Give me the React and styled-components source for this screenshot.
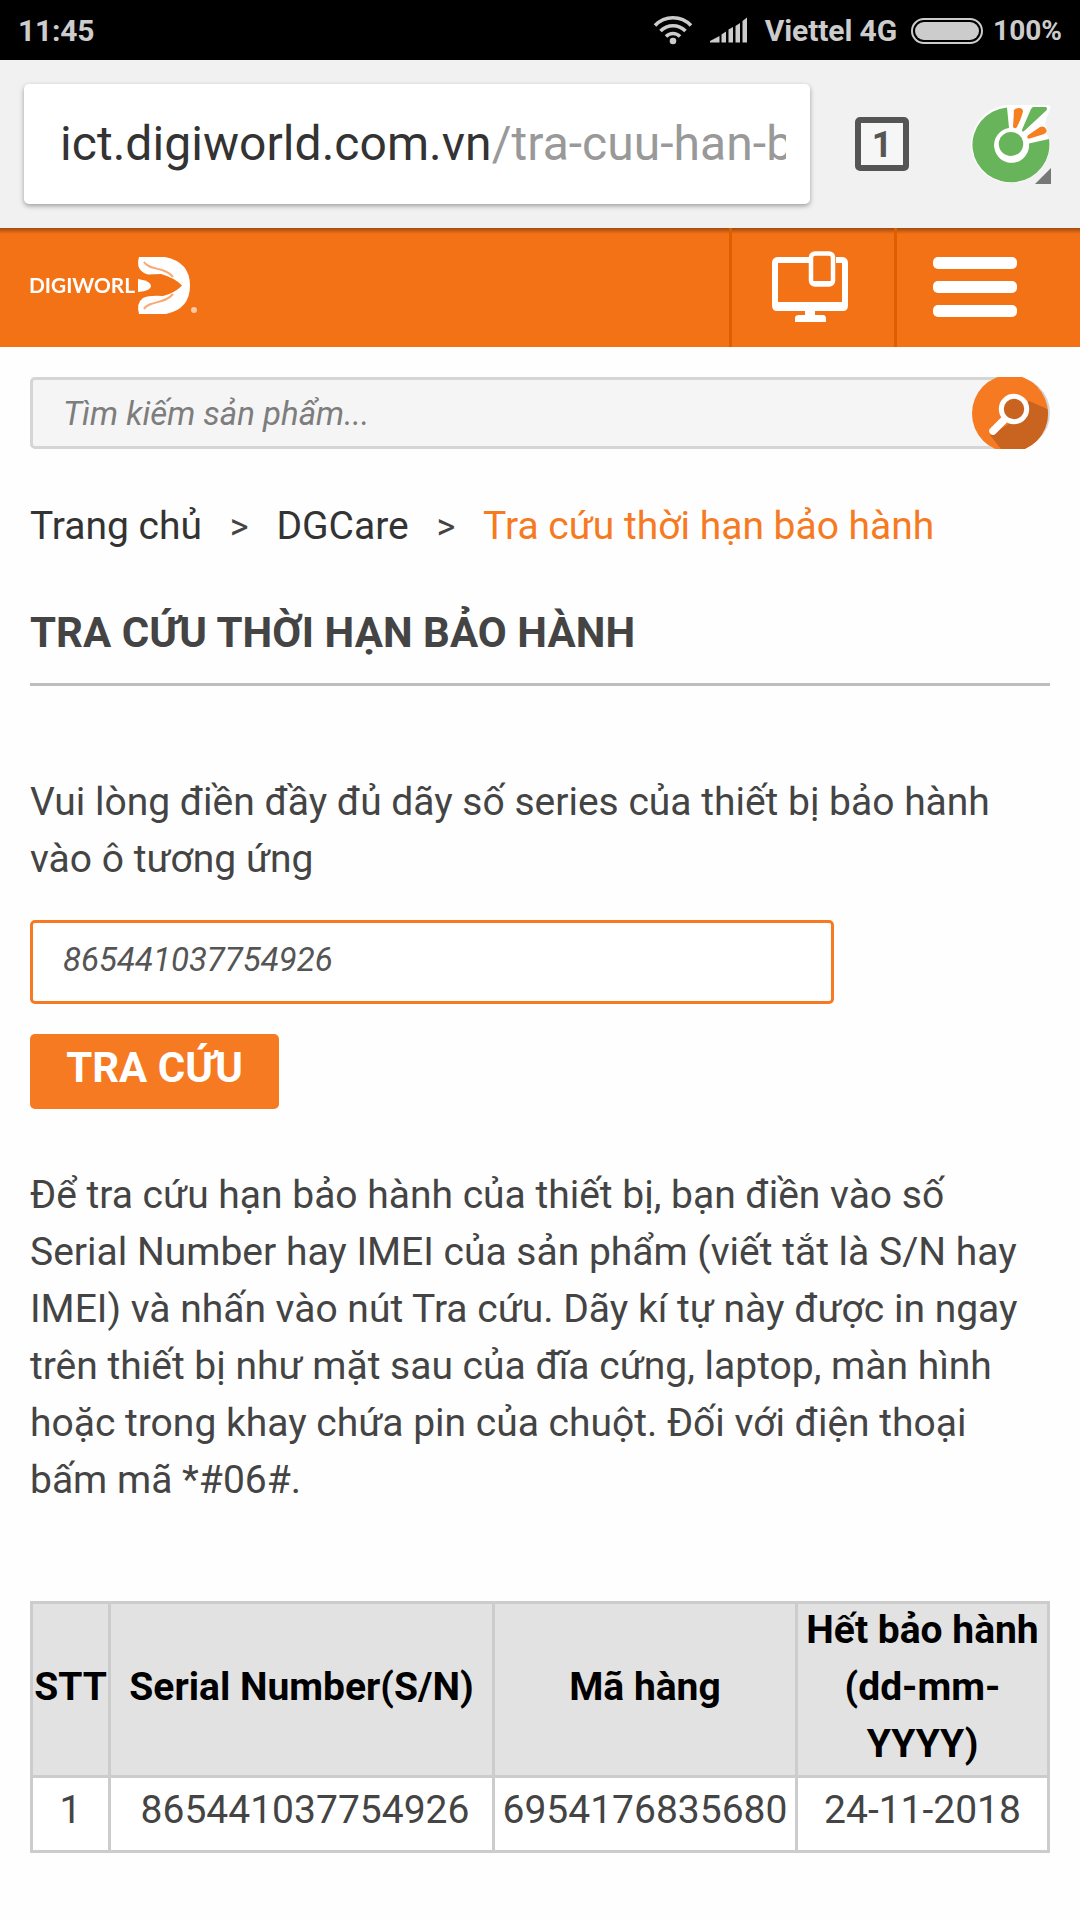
import React from 'react';
import styled, { createGlobalStyle } from 'styled-components';

const GlobalStyle = createGlobalStyle`
  * {
    box-sizing: border-box;
  }
  body {
    margin: 0;
    background: #fefefe;
    font-family: Roboto, 'Noto Sans', sans-serif;
    font-size: 39px;
    line-height: 57px;
    color: #444;
  }
`;

const Screen = styled.div`
  width: 1080px;
  height: 1920px;
  overflow: hidden;
`;

const StatusBar = styled.div`
  display: flex;
  align-items: center;
  height: 60px;
  padding: 2px 18px 0;
  background: #000;
  color: #ccc;
  font-size: 30px;
  font-weight: 700;
  line-height: 36px;
  white-space: nowrap;
  svg {
    flex: none;
    margin-top: -3px;
  }
`;

const Clock = styled.span`
  margin-right: auto;
  letter-spacing: -0.2px;
`;

const Carrier = styled.span`
  margin-left: 17px;
  letter-spacing: -0.1px;
`;

const Battery = styled.div`
  width: 72px;
  height: 26px;
  margin: 0 10px 0 14px;
  padding: 2px;
  border: 2px solid #ccc;
  border-radius: 13px;
  &::before {
    content: '';
    display: block;
    height: 18px;
    border-radius: 9px;
    background: #ccc;
  }
`;

const Percent = styled.span`
  font-size: 28px;
`;

const Toolbar = styled.div`
  display: flex;
  align-items: center;
  height: 168px;
  padding: 0 28px 0 24px;
  background: #f1f1f1;
  svg {
    flex: none;
  }
`;

const UrlBox = styled.div`
  flex: none;
  width: 786px;
  height: 120px;
  padding: 0 24px 0 36px;
  border-radius: 5px;
  background: #fff;
  box-shadow: 0 2px 5px rgba(0, 0, 0, 0.35);
`;

const Url = styled.div`
  overflow: hidden;
  color: #333;
  font-size: 48px;
  line-height: 120px;
  letter-spacing: 0.05px;
  white-space: nowrap;
  span {
    color: #999;
  }
`;

const TabCount = styled.div`
  flex: none;
  width: 54px;
  height: 54px;
  margin: 0 62px 0 45px;
  border: 6px solid #555;
  border-radius: 5px;
  background: #f6f6f6;
  color: #555;
  font-size: 36px;
  font-weight: 700;
  line-height: 44px;
  text-align: center;
`;

const Header = styled.div`
  display: flex;
  height: 119px;
  background: linear-gradient(rgba(0, 0, 0, 0.35), rgba(0, 0, 0, 0) 6px) #f47216;
`;

const Brand = styled.div`
  flex: 1;
  padding: 29px 0 0 30px;
  svg {
    filter: blur(0.6px);
  }
`;

const HeaderButton = styled.div`
  width: ${props => props.width}px;
  padding: ${props => props.pad};
  border-left: 3px solid #dc5f04;
`;

const Content = styled.div`
  padding: 30px;
`;

const Search = styled.div`
  display: flex;
  justify-content: space-between;
  height: 72px;
  border: 3px solid #d5d5d5;
  border-radius: 5px 36px 36px 5px;
  background: #f5f5f5;
  svg {
    flex: none;
    margin: -3px -3px 0 0;
  }
`;

const Placeholder = styled.div`
  padding-left: 30px;
  color: #7d7d7d;
  font-size: 33px;
  font-style: italic;
  line-height: 68px;
`;

const Breadcrumb = styled.div`
  display: flex;
  height: 57px;
  margin-top: 49px;
  white-space: nowrap;
`;

const Crumb = styled.span`
  color: ${props => (props.$active ? '#f67a22' : '#333')};
`;

const Arrow = styled.span`
  width: 74.4px;
  padding-top: 1px;
  font-size: 36px;
  text-align: center;
`;

const Title = styled.h1`
  margin: 49px 0 0;
  padding-bottom: 22px;
  border-bottom: 3px solid #bdbdbd;
  font-size: 42px;
  font-weight: 700;
  line-height: 57px;
  letter-spacing: 0.05px;
`;

const Text = styled.p`
  margin: ${props => props.$top}px 0 0;
  white-space: nowrap;
`;

const Serial = styled.div`
  width: 804px;
  height: 84px;
  margin-top: 32px;
  padding: 8px 30px;
  border: 3px solid #f67a22;
  border-radius: 5px;
  background: #fff;
  color: #555;
  font-size: 33px;
  font-style: italic;
`;

const Submit = styled.div`
  width: 249px;
  height: 75px;
  margin-top: 30px;
  padding-top: 5px;
  border-radius: 5px;
  background: #f67a22;
  color: #fff;
  font-size: 42px;
  font-weight: 700;
  text-align: center;
`;

const Table = styled.div`
  display: grid;
  grid-template-columns: 75px 381px 300px 249px;
  grid-template-rows: 171px 72px;
  gap: 3px;
  width: 1020px;
  margin-top: 92px;
  padding: 3px;
  background: #ccc;
`;

const HeadCell = styled.div`
  display: flex;
  flex-direction: column;
  justify-content: center;
  background: #e2e2e2;
  color: #000;
  font-weight: 700;
  text-align: center;
  white-space: nowrap;
  span {
    display: block;
    margin: -2px 0 2px;
  }
`;

const Cell = styled.div`
  padding: ${props => props.$pad || '4px 0'};
  background: #fff;
  text-align: center;
`;

const WifiIcon = () => (
  <svg width="40" height="30" viewBox="0 0 40 30">
    <g fill="none" stroke="#ccc" strokeWidth="3.6">
      <path d="M2 10.5C12 .2 28 .2 38 10.5" />
      <path d="M7.5 16C14.5 9 25.5 9 32.5 16" />
      <path d="M13 21.5C17 17.500 23 17.500 27 21.5" />
    </g>
    <circle cx="20" cy="26" r="3.3" fill="#ccc" />
  </svg>
);

const SignalIcon = () => (
  <svg width="55" height="26" viewBox="-17 0 55 26">
    <path
      fill="#ccc"
      d="M0 25.5V24L9.5 19v6.5zM11.500 25.5V17.5l4.500-3v11zM18.5 25.5V12.500L23 10v15.5zM25.5 25.5V9L30 6v19.5zM32.500 25.5V4l4.500-3.5v25z"
    />
  </svg>
);

const BrowserLogo = () => (
  <svg width="81" height="80" viewBox="0 0 81 82" preserveAspectRatio="none">
    <path fill="#fff" d="M41 1H77Q80 1 79 5L74 19 77 36Q80 36 79 45A39.5 40 0 1 1 41 1z" />
    <path fill="#67b45b" d="M36 3.5A38.5 38.5 0 1 0 78 36L58 40.5A17.5 18 0 1 1 38 24.5z" />
    <circle cx="40" cy="41" r="12.2" fill="#67b45b" />
    <path fill="#f5801f" d="M43 6.5Q44 4 48 4T52 8Q50 16 46 23.5 44 26 42 23.5z" />
    <path fill="#67b45b" d="M62 3H74Q77 3 75.5 6.5L54 27Q51 30 51 26.5L60 5z" />
    <path fill="#f5801f" d="M57 32 69 23.5Q73 22 75 25.5T72.5 31L58 35.5Q55 35 57 32z" />
    <path fill="#777" d="M80 65.5V82H64z" />
  </svg>
);

const DigiworldLogo = () => (
  <svg width="170" height="57" viewBox="0 0 170 57">
    <text
      x="-1"
      y="36"
      fill="#fff"
      fontSize="20.5"
      fontWeight="700"
      fontFamily="Lato, sans-serif"
      textLength="106"
      lengthAdjust="spacingAndGlyphs"
    >
      DIGIWORL
    </text>
    <path fill="#fff" d="M108 22Q121 24 121 29T108 35z" />
    <path
      fill="#fff"
      d="M109 0H135Q160 5 160 28.5T136 57H109Q106 46 113 41 119 38 133 39 145 36 152 28.5 145 21 131 17L118 17.5Q105 14 109 0z"
    />
    <g fill="none" stroke="#f8a873" strokeWidth="2">
      <path d="M114 5C120 14 134 9 143 20" />
      <path d="M114 52C120 43 134 48 143 37" />
    </g>
    <circle cx="164" cy="53" r="3" fill="#fbc9a8" />
  </svg>
);

const DevicesIcon = () => (
  <svg width="76" height="72" viewBox="0 0 76 72">
    <path fill="#fff" d="M5 6H37v6H6V51H70V12H64V6H71Q76 7 76 12V54Q76 60 71 60H5Q0 60 0 54V12Q0 7 5 6z" />
    <rect x="39" y="2.5" width="22" height="31" rx="4" fill="#f47216" stroke="#fff" strokeWidth="4.5" />
    <path fill="#fff" d="M40 30H60V35H40zM33 59H43V64H51Q54 64 54 68V71H23V67Q23 64 27 64H33z" />
  </svg>
);

const MenuIcon = () => (
  <svg width="84" height="60" viewBox="0 0 84 60" fill="#fff">
    <rect width="84" height="12" rx="5" />
    <rect y="24" width="84" height="12" rx="5" />
    <rect y="48" width="84" height="12" rx="5" />
  </svg>
);

const SearchIcon = () => (
  <svg width="78" height="72" viewBox="0 0 78 72">
    <clipPath id="disc">
      <ellipse cx="38" cy="36.5" rx="38" ry="38.5" />
    </clipPath>
    <g clipPath="url(#disc)">
      <path fill="#f67a22" d="M0 0H78V72H0z" />
      <path fill="#c96320" d="M57 24 78 33V72H29L18 58 42 44z" />
    </g>
    <circle cx="42" cy="32" r="12.7" fill="#c96320" stroke="#fff" strokeWidth="5" />
    <path stroke="#fff" strokeWidth="7.5" strokeLinecap="round" d="M32 43 21 54" />
  </svg>
);

const App = () => (
  <Screen>
    <GlobalStyle />
    <StatusBar>
      <Clock>11:45</Clock>
      <WifiIcon />
      <SignalIcon />
      <Carrier>Viettel 4G</Carrier>
      <Battery />
      <Percent>100%</Percent>
    </StatusBar>
    <Toolbar>
      <UrlBox>
        <Url>
          ict.digiworld.com.vn<span>/tra-cuu-han-b</span>
        </Url>
      </UrlBox>
      <TabCount>1</TabCount>
      <BrowserLogo />
    </Toolbar>
    <Header>
      <Brand>
        <DigiworldLogo />
      </Brand>
      <HeaderButton width={165} pad="23px 0 0 40px">
        <DevicesIcon />
      </HeaderButton>
      <HeaderButton width={186} pad="29px 0 0 36px">
        <MenuIcon />
      </HeaderButton>
    </Header>
    <Content>
      <Search>
        <Placeholder>Tìm kiếm sản phẩm...</Placeholder>
        <SearchIcon />
      </Search>
      <Breadcrumb>
        <Crumb>Trang chủ</Crumb>
        <Arrow>&gt;</Arrow>
        <Crumb>DGCare</Crumb>
        <Arrow>&gt;</Arrow>
        <Crumb $active>Tra cứu thời hạn bảo hành</Crumb>
      </Breadcrumb>
      <Title>TRA CỨU THỜI HẠN BẢO HÀNH</Title>
      <Text $top={88}>
        Vui lòng điền đầy đủ dãy số series của thiết bị bảo hành
        <br />
        vào ô tương ứng
      </Text>
      <Serial>865441037754926</Serial>
      <Submit>TRA CỨU</Submit>
      <Text $top={58}>
        Để tra cứu hạn bảo hành của thiết bị, bạn điền vào số
        <br />
        Serial Number hay IMEI của sản phẩm (viết tắt là S/N hay
        <br />
        IMEI) và nhấn vào nút Tra cứu. Dãy kí tự này được in ngay
        <br />
        trên thiết bị như mặt sau của đĩa cứng, laptop, màn hình
        <br />
        hoặc trong khay chứa pin của chuột. Đối với điện thoại
        <br />
        bấm mã *#06#.
      </Text>
      <Table>
        <HeadCell>
          <span>STT</span>
        </HeadCell>
        <HeadCell>
          <span>Serial Number(S/N)</span>
        </HeadCell>
        <HeadCell>
          <span>Mã hàng</span>
        </HeadCell>
        <HeadCell>
          <span>
            Hết bảo hành
            <br />
            (dd-mm-
            <br />
            YYYY)
          </span>
        </HeadCell>
        <Cell>1</Cell>
        <Cell $pad="4px 0 0 7px">865441037754926</Cell>
        <Cell>6954176835680</Cell>
        <Cell>24-11-2018</Cell>
      </Table>
    </Content>
  </Screen>
);

export default App;
